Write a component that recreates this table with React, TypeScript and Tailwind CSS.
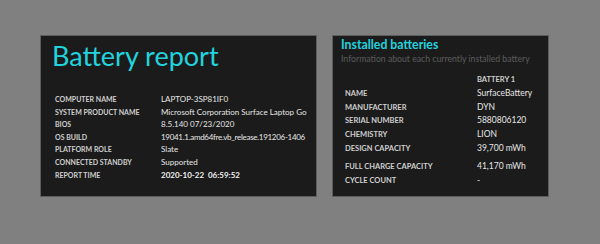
import React from "react";

const system: [string, string, string?][] = [
  ["COMPUTER NAME", "LAPTOP-3SP81IF0"],
  ["SYSTEM PRODUCT NAME", "Microsoft Corporation Surface Laptop Go"],
  ["BIOS", "8.5.140 07/23/2020"],
  ["OS BUILD", "19041.1.amd64fre.vb_release.191206-1406", "tracking-[-0.3px]"],
  ["PLATFORM ROLE", "Slate"],
  ["CONNECTED STANDBY", "Supported"],
];

const battery: [string, string][] = [
  ["NAME", "SurfaceBattery"],
  ["MANUFACTURER", "DYN"],
  ["SERIAL NUMBER", "5880806120"],
  ["CHEMISTRY", "LION"],
  ["DESIGN CAPACITY", "39,700 mWh"],
];

const App: React.FC = () => {
  return (
    <div
      className="w-[600px] h-[244px] bg-[#808080] flex items-start gap-[15px] pt-[35px] pl-[40px] whitespace-nowrap"
      style={{ fontFamily: 'Lato, "Open Sans", sans-serif' }}
    >
      {/* Battery report */}
      <section className="w-[277px] h-[162px] bg-[#1b1b1b] border border-[#5e5e5e] pl-[11px] pt-[1px]">
        <h1 className="text-[27px] leading-[38px] text-[#22d3df] font-normal">
          Battery report
        </h1>
        <div className="mt-[18px] pl-[3px] grid grid-cols-[106px_1fr] text-[8px] leading-[12.6px]">
          {system.map(([k, v, extra]) => (
            <React.Fragment key={k}>
              <div className="text-[7px] font-bold text-[#cfcfcf]">{k}</div>
              <div className={`text-[#e6e6e6] ${extra ?? ""}`}>{v}</div>
            </React.Fragment>
          ))}
          <div className="text-[7px] font-bold text-[#cfcfcf]">REPORT TIME</div>
          <div className="text-[#f0f0f0] font-bold whitespace-pre">2020-10-22  06:59:52</div>
        </div>
      </section>

      {/* Installed batteries */}
      <section className="w-[217px] h-[162px] bg-[#1b1b1b] border border-[#5e5e5e] pl-[8px] pt-[1px]">
        <h2 className="text-[12.3px] leading-[16px] font-bold text-[#22d3df]">Installed batteries</h2>
        <p className="text-[8.7px] leading-[12px] text-[#5c5c5c]">
          Information about each currently installed battery
        </p>
        <div className="mt-[8px] pl-[4px] grid grid-cols-[132px_1fr] text-[8.5px] leading-[13.8px]">
          <div />
          <div className="text-[7.5px] font-bold text-[#cfcfcf]">BATTERY 1</div>
          {battery.map(([k, v]) => (
            <React.Fragment key={k}>
              <div className="text-[7.5px] font-bold text-[#cfcfcf]">{k}</div>
              <div className="text-[#e6e6e6]">{v}</div>
            </React.Fragment>
          ))}
          <div className="mt-[4px] text-[7.5px] font-bold text-[#cfcfcf]">FULL CHARGE CAPACITY</div>
          <div className="mt-[4px] text-[#e6e6e6]">41,170 mWh</div>
          <div className="text-[7.5px] font-bold text-[#cfcfcf]">CYCLE COUNT</div>
          <div className="text-[#e6e6e6]">-</div>
        </div>
      </section>
    </div>
  );
};

export default App;
